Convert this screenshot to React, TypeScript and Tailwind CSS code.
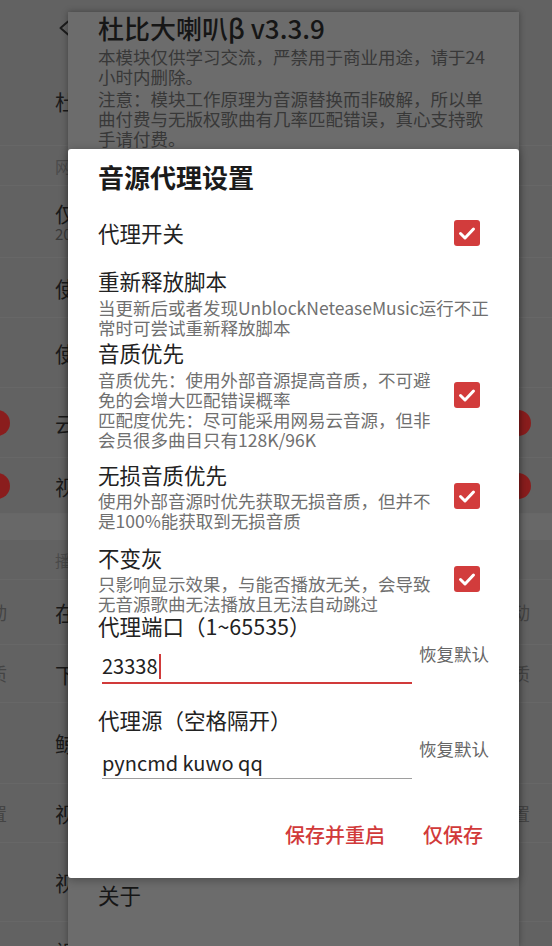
import React from "react";

const bgRows = [
  { h: "h-[90px]", text: "杜" },
  { h: "h-[40px]", text: "网", header: true },
  { h: "h-[72px]", text: "仅", sub: "20" },
  { h: "h-[60px]", text: "使" },
  { h: "h-[70px]", text: "使" },
  { h: "h-[70px]", text: "云", toggle: true },
  { h: "h-[56px]", text: "视", toggle: true },
  { h: "h-[26px]", band: true },
  { h: "h-[40px]", text: "播", header: true },
  { h: "h-[65px]", text: "在", side: "动" },
  { h: "h-[58px]", text: "下", side: "质" },
  { h: "h-[81px]", text: "鲸" },
  { h: "h-[59px]", text: "视", side: "置" },
  { h: "h-[79px]", text: "视" },
  { h: "h-[58px]", text: "视" },
];

function Checkbox() {
  return (
    <div className="ml-auto mr-[9px] flex h-[26px] w-[26px] shrink-0 items-center justify-center rounded-[3px] bg-[#d23c3c]">
      <svg width="26" height="26" viewBox="0 0 26 26" fill="none">
        <path d="M6.5 13.5 L11 18 L19.5 9" stroke="white" strokeWidth="3" strokeLinecap="round" strokeLinejoin="round" />
      </svg>
    </div>
  );
}

function PrefRow({
  title,
  desc,
  checked,
  className,
  textW,
  descMt,
}: {
  title: string;
  desc?: React.ReactNode;
  checked?: boolean;
  className: string;
  textW: string;
  descMt?: string;
}) {
  return (
    <div className={`flex items-center ${className}`}>
      <div className={textW}>
        <div className="text-[21.5px] leading-[28px] text-[#222]">{title}</div>
        {desc && <div className={`${descMt ?? "mt-[2px]"} text-[17.5px] leading-[20px] text-[#707070]`}>{desc}</div>}
      </div>
      {checked && <Checkbox />}
    </div>
  );
}

export default function App() {
  return (
    <div className="relative h-[946px] w-[552px] overflow-hidden bg-[#626262] font-['Noto_Sans_CJK_SC','Noto_Sans',sans-serif]">
      {/* background settings page */}
      <div className="flex flex-col">
        <div className="flex h-[56px] items-center pl-[58px]">
          <svg width="12" height="16" viewBox="0 0 12 16" fill="none">
            <path d="M10 1.5 L2.5 8 L10 14.5" stroke="#1c1c1c" strokeWidth="2" strokeLinecap="round" strokeLinejoin="round" />
          </svg>
        </div>
        {bgRows.map((r, i) =>
          r.band ? (
            <div key={i} className={`${r.h} bg-[#686868]`} />
          ) : (
            <div key={i} className={`flex ${r.h} items-center border-b border-[#676767]`}>
              <div className="flex w-[55px] items-center">
                {r.toggle && <div className="-ml-[16px] h-[26px] w-[26px] rounded-full bg-[#8a1d1d]" />}
                {r.side && <span className="-ml-[11px] text-[18px] text-[#444]">{r.side}</span>}
              </div>
              {r.header ? (
                <span className="text-[16px] text-[#4a4a4a]">{r.text}</span>
              ) : (
                <div className="flex flex-col">
                  <span className="text-[21px] leading-[24px] text-[#1a1a1a]">{r.text}</span>
                  {r.sub && <span className="text-[15px] leading-[18px] text-[#3a3a3a]">{r.sub}</span>}
                </div>
              )}
              <div className="ml-auto flex items-center">
                {r.toggle && <div className="mr-[21px] h-[26px] w-[26px] rounded-full bg-[#8a1d1d]" />}
                {r.side && <span className="mr-[22px] text-[18px] text-[#444]">{r.side}</span>}
              </div>
            </div>
          )
        )}
      </div>

      {/* module info panel */}
      <div className="absolute bottom-0 left-[68px] top-[12px] flex w-[451px] flex-col bg-[#6c6c6c] pl-[30px] shadow-[0_0_6px_rgba(0,0,0,0.35)]">
        <h1 className="text-[26px] font-medium leading-[32px] text-[#161616]">杜比大喇叭β v3.3.9</h1>
        <div className="mt-[3px] w-[394px] text-[17.5px] leading-[20px] text-[#383838]">
          <p>本模块仅供学习交流，严禁用于商业用途，请于24小时内删除。</p>
          <p className="mt-[2px]">注意：模块工作原理为音源替换而非破解，所以单曲付费与无版权歌曲有几率匹配错误，真心支持歌手请付费。</p>
        </div>
        <div className="mb-[37px] mt-auto text-[21.5px] leading-[28px] text-[#161616]">关于</div>
      </div>

      {/* proxy settings dialog */}
      <div className="absolute left-[68px] top-[149px] w-[451px] rounded-[3px] bg-white px-[30px] pb-[29px] shadow-[0_2px_10px_rgba(0,0,0,0.3)]">
        <h2 className="mt-[12px] text-[26px] font-bold leading-[32px] text-[#1b1b1b]">音源代理设置</h2>

        <PrefRow className="mt-[26px]" textW="w-[340px]" title="代理开关" checked />
        <PrefRow
          className="mt-[20px]"
          textW="w-[391px]"
          descMt="mt-[3px]"
          title="重新释放脚本"
          desc="当更新后或者发现UnblockNeteaseMusic运行不正常时可尝试重新释放脚本"
        />
        <PrefRow
          className="mt-[1px]"
          textW="w-[340px]"
          descMt="mt-[3px]"
          title="音质优先"
          checked
          desc={
            <>
              <p>音质优先：使用外部音源提高音质，不可避免的会增大匹配错误概率</p>
              <p>匹配度优先：尽可能采用网易云音源，但非会员很多曲目只有128K/96K</p>
            </>
          }
        />
        <PrefRow
          className="mt-[11px]"
          textW="w-[340px]"
          title="无损音质优先"
          checked
          desc="使用外部音源时优先获取无损音质，但并不是100%能获取到无损音质"
        />
        <PrefRow
          className="mt-[13px]"
          textW="w-[340px]"
          title="不变灰"
          checked
          desc="只影响显示效果，与能否播放无关，会导致无音源歌曲无法播放且无法自动跳过"
        />

        <div className="-mt-[2px] text-[21.5px] leading-[28px] text-[#222]">代理端口（1~65535）</div>
        <div className="flex items-start">
          <div className="ml-[4px] flex w-[311px] items-center border-b-2 border-[#d13a3a] pb-[2px] pt-[12px]">
            <span className="text-[20px] leading-[28px] text-[#222]">23338</span>
            <span className="ml-[1px] h-[25px] w-[2px] bg-[#d13a3a]" />
          </div>
          <span className="ml-[7px] mt-[2px] whitespace-nowrap text-[17.5px] leading-[24px] text-[#666]">恢复默认</span>
        </div>

        <div className="mt-[22px] text-[21.5px] leading-[28px] text-[#222]">代理源（空格隔开）</div>
        <div className="flex items-start">
          <div className="ml-[4px] w-[311px] border-b-[1.5px] border-[#9e9e9e] pb-[1px] pt-[15px]">
            <span className="text-[20px] leading-[28px] text-[#222]">pyncmd kuwo qq</span>
          </div>
          <span className="ml-[7px] mt-[3px] whitespace-nowrap text-[17.5px] leading-[24px] text-[#666]">恢复默认</span>
        </div>

        <div className="mt-[42px] flex justify-end gap-[38px] pr-[6px]">
          <button className="text-[20px] font-medium leading-[28px] text-[#d13a3a]">保存并重启</button>
          <button className="text-[20px] font-medium leading-[28px] text-[#d13a3a]">仅保存</button>
        </div>
      </div>
    </div>
  );
}
